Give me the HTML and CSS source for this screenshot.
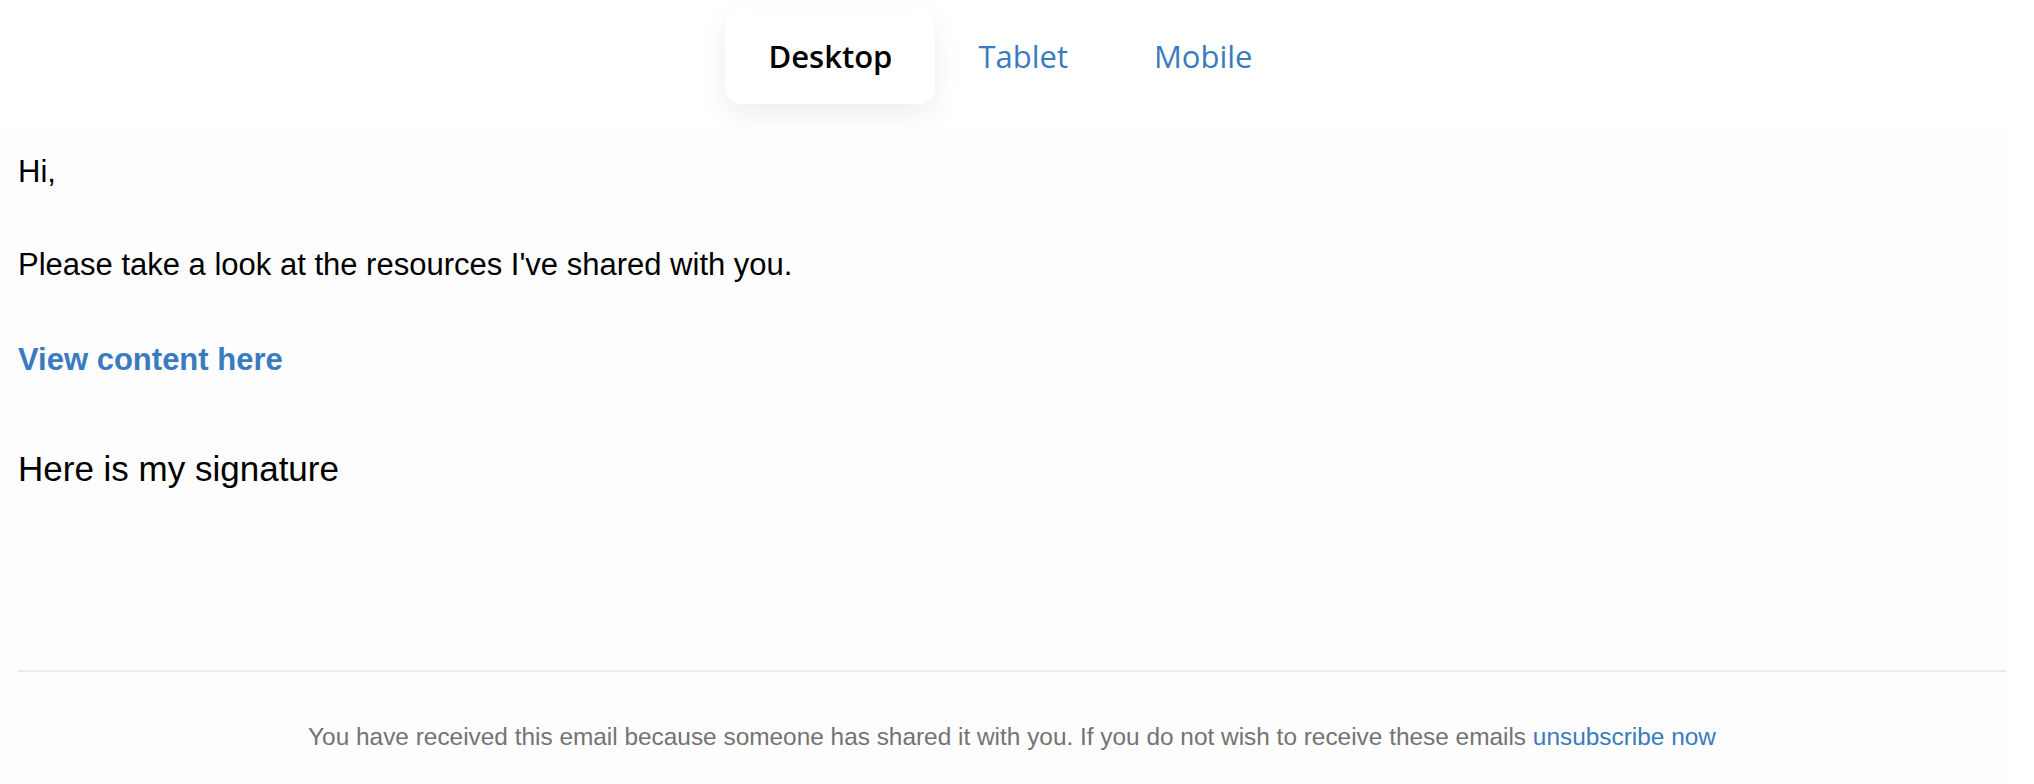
FILE: index.html
```html
<!DOCTYPE html>
<html lang="en">

<head>
    <meta charset="UTF-8">
    <meta name="viewport" content="width=device-width, initial-scale=1.0">
    <title>Email preview</title>
    <link rel="stylesheet" href="styles.css">
</head>

<body>
    <div class="preview-bar">
        <div class="tabs">
            <a class="tab active" href="#">Desktop</a>
            <a class="tab" href="#">Tablet</a>
            <a class="tab" href="#">Mobile</a>
        </div>
    </div>

    <div class="email">
        <p class="greeting">Hi,</p>
        <p class="message">Please take a look at the resources I've shared with you.</p>
        <p class="cta"><a href="#">View content here</a></p>
        <p class="signature">Here is my signature</p>

        <hr class="divider">

        <p class="footer">
            You have received this email because someone has shared it with you. If you do not wish to receive these emails
            <a href="#">unsubscribe now</a>
        </p>
    </div>
</body>

</html>
```

FILE: styles.css
```css
body {
    margin: 0;
    background: #fff;
    font-family: "Liberation Sans", Arial, sans-serif;
    color: #000;
}

a {
    color: #3a7bc0;
    text-decoration: none;
}

/* 预览切换 */
.preview-bar {
    padding: 9px 13px 23px 0;
    overflow: hidden;
}

.tabs {
    display: flex;
    justify-content: center;
}

.tab {
    font-family: "Open Sans", sans-serif;
    font-size: 31px;
    line-height: 42px;
    padding: 26px 43px 27px;
    border-radius: 16px;
}

.tab.active {
    background: #fff;
    color: #000;
    font-weight: 600;
    box-shadow: 0 10px 30px rgba(0, 0, 0, 0.07);
}

/* 邮件内容 */
.email {
    width: calc(100% - 28px);
    box-sizing: border-box;
    padding: 27px 0 40px 18px;
    background: #fdfdfd;
}

.email p {
    margin: 0;
    font-size: 31px;
    line-height: 36px;
}

.message {
    margin-top: 57px !important;
}

.cta {
    margin-top: 59px !important;
    font-weight: bold;
}

.email .signature {
    margin-top: 71px;
    font-size: 35px;
    line-height: 40px;
}

.divider {
    margin: 181px 0 0;
    border: none;
    height: 2px;
    background: #ececec;
}

.email .footer {
    margin-top: 51px;
    font-size: 24.4px;
    line-height: 28px;
    color: #737373;
    text-align: center;
}
```
